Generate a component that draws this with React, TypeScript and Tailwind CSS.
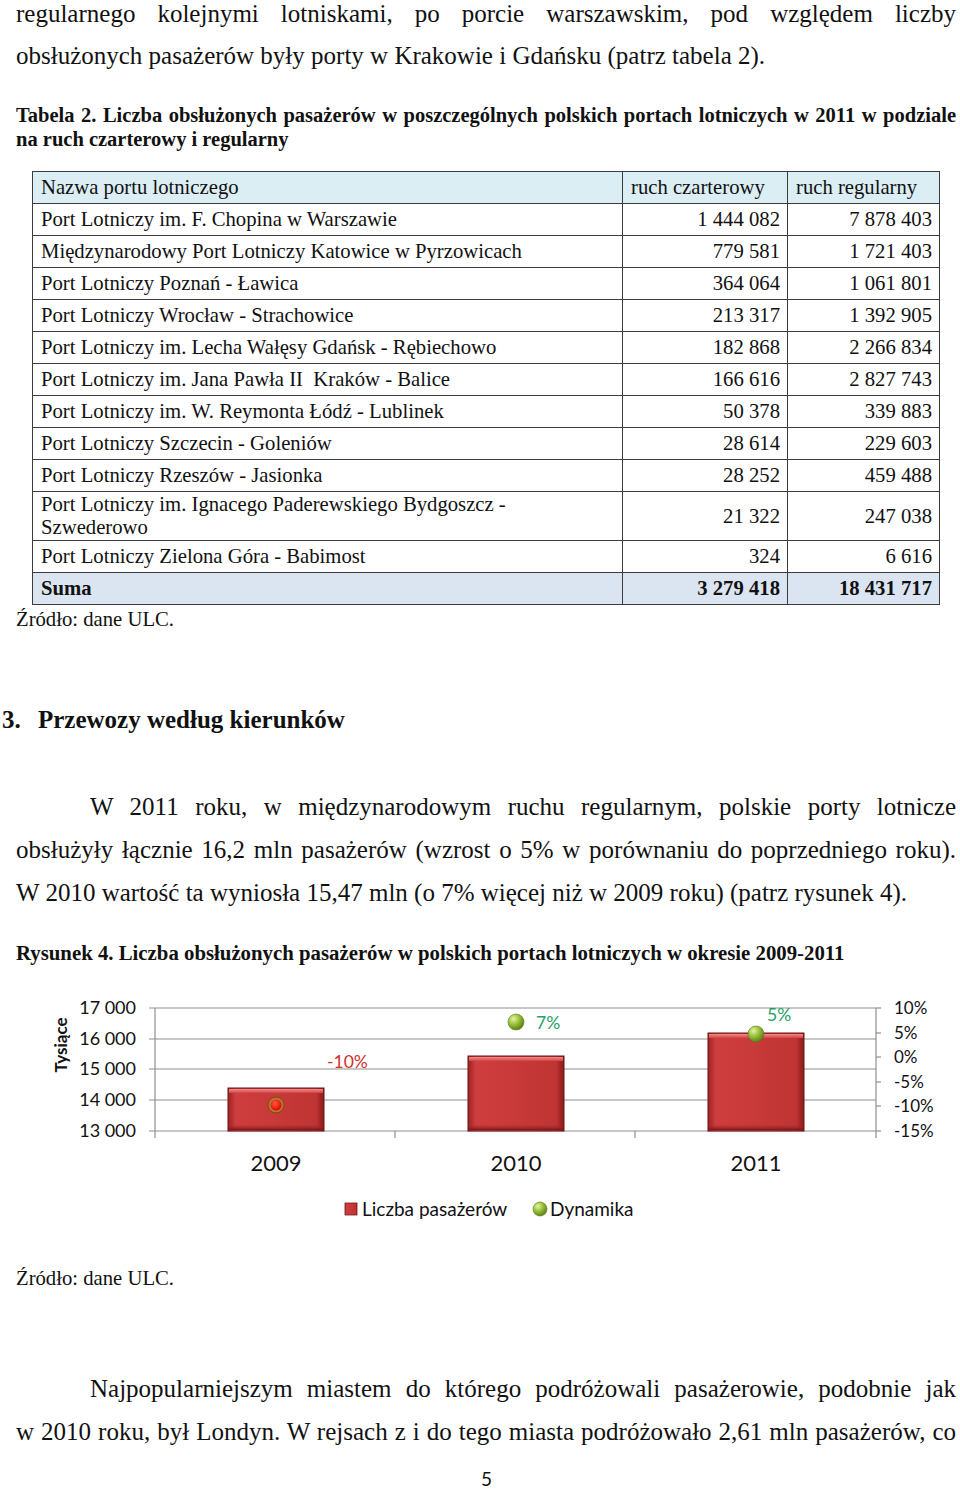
const rows: { name: string[]; charter: string; regular: string }[] = [
  { name: ["Port Lotniczy im. F. Chopina w Warszawie"], charter: "1 444 082", regular: "7 878 403" },
  { name: ["Międzynarodowy Port Lotniczy Katowice w Pyrzowicach"], charter: "779 581", regular: "1 721 403" },
  { name: ["Port Lotniczy Poznań - Ławica"], charter: "364 064", regular: "1 061 801" },
  { name: ["Port Lotniczy Wrocław - Strachowice"], charter: "213 317", regular: "1 392 905" },
  { name: ["Port Lotniczy im. Lecha Wałęsy Gdańsk - Rębiechowo"], charter: "182 868", regular: "2 266 834" },
  { name: ["Port Lotniczy im. Jana Pawła II  Kraków - Balice"], charter: "166 616", regular: "2 827 743" },
  { name: ["Port Lotniczy im. W. Reymonta Łódź - Lublinek"], charter: "50 378", regular: "339 883" },
  { name: ["Port Lotniczy Szczecin - Goleniów"], charter: "28 614", regular: "229 603" },
  { name: ["Port Lotniczy Rzeszów - Jasionka"], charter: "28 252", regular: "459 488" },
  { name: ["Port Lotniczy im. Ignacego Paderewskiego Bydgoszcz -", "Szwederowo"], charter: "21 322", regular: "247 038" },
  { name: ["Port Lotniczy Zielona Góra - Babimost"], charter: "324", regular: "6 616" },
];

const leftTicks = [
  { y: 1008, label: "17 000" },
  { y: 1039, label: "16 000" },
  { y: 1069, label: "15 000" },
  { y: 1100, label: "14 000" },
  { y: 1131, label: "13 000" },
];

const rightTicks = [
  { y: 1008, label: "10%" },
  { y: 1033, label: "5%" },
  { y: 1057, label: "0%" },
  { y: 1082, label: "-5%" },
  { y: 1106, label: "-10%" },
  { y: 1131, label: "-15%" },
];

const bars = [
  { x: 228, top: 1088, year: "2009" },
  { x: 468, top: 1056, year: "2010" },
  { x: 708, top: 1033, year: "2011" },
];

function Chart() {
  const chartFont = "Lato, 'Open Sans', sans-serif";
  return (
    <svg width="960" height="240" viewBox="0 990 960 240" className="block mt-[25px]" fontFamily={chartFont}>
      <defs>
        <linearGradient id="barH" x1="0" x2="1" y1="0" y2="0">
          <stop offset="0" stopColor="#9c2222" />
          <stop offset="0.08" stopColor="#cf3e3e" />
          <stop offset="0.5" stopColor="#c83939" />
          <stop offset="0.92" stopColor="#bf3434" />
          <stop offset="1" stopColor="#861b1b" />
        </linearGradient>
        <linearGradient id="barTop" x1="0" x2="0" y1="0" y2="1">
          <stop offset="0" stopColor="#f28a8a" />
          <stop offset="1" stopColor="#d04545" />
        </linearGradient>
        <linearGradient id="barBottom" x1="0" x2="0" y1="0" y2="1">
          <stop offset="0" stopColor="#b02e2e" stopOpacity="0" />
          <stop offset="1" stopColor="#7c1717" />
        </linearGradient>
        <radialGradient id="green" cx="0.35" cy="0.3" r="0.75">
          <stop offset="0" stopColor="#e4f3a8" />
          <stop offset="0.45" stopColor="#9cc43c" />
          <stop offset="1" stopColor="#557a12" />
        </radialGradient>
        <radialGradient id="red" cx="0.4" cy="0.35" r="0.7">
          <stop offset="0" stopColor="#ff5a3a" />
          <stop offset="1" stopColor="#e00000" />
        </radialGradient>
      </defs>

      {leftTicks.map((t) => (
        <line key={t.y} x1="149" x2="876" y1={t.y} y2={t.y} stroke="#8f8f8f" strokeWidth="1.2" />
      ))}
      <line x1="155" x2="155" y1="1008" y2="1138" stroke="#8f8f8f" strokeWidth="1.2" />
      <line x1="876" x2="876" y1="1008" y2="1138" stroke="#8f8f8f" strokeWidth="1.2" />
      {[395, 635].map((x) => (
        <line key={x} x1={x} x2={x} y1="1131" y2="1138" stroke="#8f8f8f" strokeWidth="1.2" />
      ))}
      {rightTicks.map((t) => (
        <line key={t.y} x1="876" x2="881" y1={t.y} y2={t.y} stroke="#8f8f8f" strokeWidth="1.2" />
      ))}

      {leftTicks.map((t) => (
        <text key={t.label} x="136" y={t.y + 6} textAnchor="end" fontSize="18" fill="#111">
          {t.label}
        </text>
      ))}
      {rightTicks.map((t) => (
        <text key={t.label} x="894" y={t.y + 6} fontSize="17" fill="#111">
          {t.label}
        </text>
      ))}

      <text
        x="0"
        y="0"
        transform="translate(67 1045) rotate(-90)"
        textAnchor="middle"
        fontSize="17"
        fontWeight="bold"
        fill="#111"
      >
        Tysiące
      </text>

      {bars.map((b) => (
        <g key={b.year}>
          <rect x={b.x} y={b.top} width="96" height={1131 - b.top} fill="url(#barH)" stroke="#6e1515" strokeWidth="1" />
          <rect x={b.x + 1} y={b.top + 1} width="94" height="4" fill="url(#barTop)" />
          <rect x={b.x + 1} y="1124" width="94" height="6" fill="url(#barBottom)" />
          <text x={b.x + 48} y="1171" textAnchor="middle" fontSize="22" fill="#111">
            {b.year}
          </text>
        </g>
      ))}

      <circle cx="276" cy="1105" r="8" fill="#b8762e" stroke="#7a4a18" strokeWidth="1" />
      <circle cx="276" cy="1105" r="5.5" fill="url(#red)" />
      <circle cx="516" cy="1022" r="8" fill="url(#green)" stroke="#5a7a1a" strokeWidth="0.6" />
      <circle cx="756" cy="1034" r="8" fill="url(#green)" stroke="#5a7a1a" strokeWidth="0.6" />

      <text x="327" y="1068" fontSize="17.5" fill="#d0312d">-10%</text>
      <text x="536" y="1029" fontSize="17.5" fill="#26a06a">7%</text>
      <text x="767" y="1021" fontSize="17.5" fill="#26a06a">5%</text>

      <rect x="345" y="1203" width="12" height="12" fill="url(#barH)" stroke="#7a1a1a" strokeWidth="0.8" />
      <text x="362" y="1216" fontSize="19" fill="#111">Liczba pasażerów</text>
      <circle cx="540" cy="1209" r="7" fill="url(#green)" stroke="#5a7a1a" strokeWidth="0.6" />
      <text x="550" y="1216" fontSize="19" fill="#111">Dynamika</text>
    </svg>
  );
}

export default function App() {
  const cell = "border border-[#3c3c3c] px-[8px] py-[1px] h-[32px] leading-[23px]";
  return (
    <div className="w-[960px] h-[1490px] overflow-hidden bg-white text-[#111] font-['Liberation_Serif','Times_New_Roman',serif]">
      <div className="pl-[16px] pr-[4px] mt-[-7px] text-[25px] leading-[42px]">
        <span className="block whitespace-nowrap text-justify [text-align-last:justify]">
          regularnego kolejnymi lotniskami, po porcie warszawskim, pod względem liczby
        </span>
        <span className="block">
          obsłużonych pasażerów były porty w Krakowie i Gdańsku (patrz tabela 2).
        </span>
      </div>

      <p className="mt-[26px] pl-[16px] pr-[4px] text-[20.5px] leading-[24px] font-bold">
        <span className="block whitespace-nowrap text-justify [text-align-last:justify]">
          Tabela 2. Liczba obsłużonych pasażerów w poszczególnych polskich portach lotniczych w 2011 w podziale
        </span>
        <span className="block">na ruch czarterowy i regularny</span>
      </p>

      <table className="mt-[20px] ml-[32px] w-[907px] table-fixed border-collapse text-[20.7px]">
        <colgroup>
          <col className="w-[590px]" />
          <col className="w-[165px]" />
          <col className="w-[152px]" />
        </colgroup>
        <thead>
          <tr className="bg-[#dbeef4]">
            <td className={cell}>Nazwa portu lotniczego</td>
            <td className={cell}>ruch czarterowy</td>
            <td className={cell}>ruch regularny</td>
          </tr>
        </thead>
        <tbody>
          {rows.map((r) => (
            <tr key={r.charter}>
              <td className={cell}>
                {r.name.map((n) => (
                  <span key={n} className="block whitespace-pre">
                    {n}
                  </span>
                ))}
              </td>
              <td className={cell + " text-right pr-[7px]"}>{r.charter}</td>
              <td className={cell + " text-right pr-[7px]"}>{r.regular}</td>
            </tr>
          ))}
          <tr className="bg-[#dbe5f1] font-bold">
            <td className={cell}>Suma</td>
            <td className={cell + " text-right pr-[7px]"}>3 279 418</td>
            <td className={cell + " text-right pr-[7px]"}>18 431 717</td>
          </tr>
        </tbody>
      </table>

      <p className="mt-[3px] pl-[16px] text-[20.7px] leading-[22px]">Źródło: dane ULC.</p>

      <h2 className="mt-[75px] flex text-[25px] leading-[30px] font-bold">
        <span className="w-[38px] pl-[2px]">3.</span>
        <span>Przewozy według kierunków</span>
      </h2>

      <div className="mt-[50px] pl-[16px] pr-[4px] text-[25px] leading-[43px]">
        <span className="block whitespace-nowrap pl-[74px] text-justify [text-align-last:justify]">
          W 2011 roku, w międzynarodowym ruchu regularnym, polskie porty lotnicze
        </span>
        <span className="block whitespace-nowrap text-justify [text-align-last:justify]">
          obsłużyły łącznie 16,2 mln pasażerów (wzrost o 5% w porównaniu do poprzedniego roku).
        </span>
        <span className="block whitespace-nowrap">
          W 2010 wartość ta wyniosła 15,47 mln (o 7% więcej niż w 2009 roku) (patrz rysunek 4).
        </span>
      </div>

      <p className="mt-[27px] pl-[16px] text-[20.8px] leading-[24px] font-bold whitespace-nowrap">
        Rysunek 4. Liczba obsłużonych pasażerów w polskich portach lotniczych w okresie 2009-2011
      </p>

      <Chart />

      <p className="mt-[37px] pl-[16px] text-[20.7px] leading-[22px]">Źródło: dane ULC.</p>

      <div className="mt-[78px] pl-[16px] pr-[4px] text-[25px] leading-[43px]">
        <span className="block whitespace-nowrap pl-[74px] text-justify [text-align-last:justify]">
          Najpopularniejszym miastem do którego podróżowali pasażerowie, podobnie jak
        </span>
        <span className="block whitespace-nowrap text-justify [text-align-last:justify]">
          w 2010 roku, był Londyn. W rejsach z i do tego miasta podróżowało 2,61 mln pasażerów, co
        </span>
      </div>

      <p className="mt-[16px] text-center pl-[13px] text-[19px] leading-[20px] font-['Lato',sans-serif]">5</p>
    </div>
  );
}
